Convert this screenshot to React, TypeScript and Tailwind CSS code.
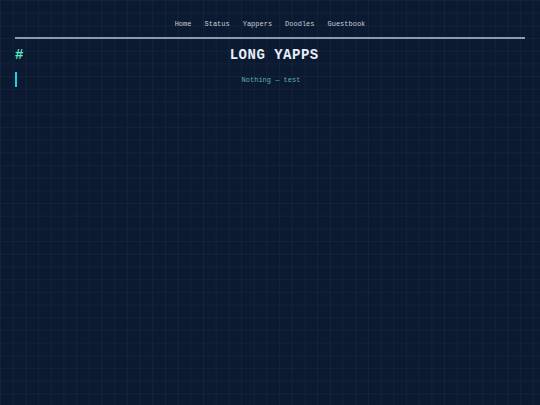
import React from "react";

export default function App() {
  return (
    <div className="min-h-[405px] w-full bg-[#0b1a31] bg-[linear-gradient(rgba(148,163,184,0.06)_1px,transparent_1px),linear-gradient(90deg,rgba(148,163,184,0.06)_1px,transparent_1px)] bg-[size:12.7px_12.7px] font-['Liberation_Mono',monospace] px-[15px]">
      <nav className="flex justify-center gap-[13px] pt-[20px] text-[7px] leading-[8px] text-[#c3cbd6]">
        <span>Home</span>
        <span>Status</span>
        <span>Yappers</span>
        <span>Doodles</span>
        <span>Guestbook</span>
      </nav>
      <div className="mt-[9px] h-[2px] bg-[#8e9aab]" />
      <div className="mt-[8px] flex items-center text-[14px] leading-[16px] font-bold">
        <span className="text-[#5ee8c8]">#</span>
        <h1 className="flex-1 text-center tracking-[0.5px] text-[#e6eef6]">LONG YAPPS</h1>
      </div>
      <div className="mt-[9px] flex">
        <div className="w-[2px] bg-[#22cfe0]" />
        <p className="flex-1 py-[3.5px] text-center text-[7px] leading-[8px] text-[#5cb3a8]">
          Nothing — test
        </p>
      </div>
    </div>
  );
}
